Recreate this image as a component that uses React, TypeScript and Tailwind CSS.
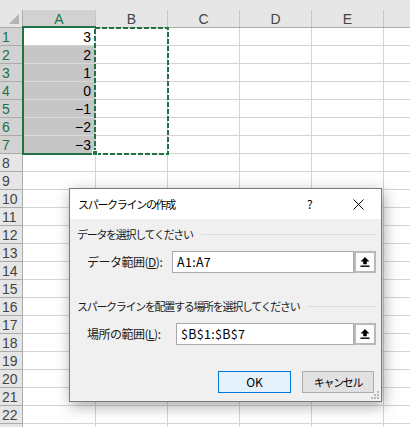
import React from 'react';

const COLS = [
  { key: 'A', w: 'w-[73px]' },
  { key: 'B', w: 'w-[72px]' },
  { key: 'C', w: 'w-[72px]' },
  { key: 'D', w: 'w-[72px]' },
  { key: 'E', w: 'w-[72px]' },
];

const VALUES = ['3', '2', '1', '0', '−1', '−2', '−3'];
const ROW_COUNT = 23;

const gridFont = "font-['Liberation_Sans','Noto_Sans_CJK_JP',sans-serif]";
const uiFont = "font-['Noto_Sans_CJK_JP','Noto_Sans',sans-serif]";
// Japanese text in the dialog is narrower than full-width CJK glyphs
const jp = 'text-[11px] tracking-[-1.3px] leading-[16px]';

const RefIcon: React.FC = () => (
  <svg width="12" height="12" viewBox="0 0 12 12">
    <path d="M6 1 L10.5 5.5 L7.8 5.5 L7.8 8.3 L4.2 8.3 L4.2 5.5 L1.5 5.5 Z" fill="#000" />
    <rect x="1.5" y="9.5" width="9" height="1.4" fill="#000" />
  </svg>
);

const RefInput: React.FC<{ value: string; labelWidth: string; label: React.ReactNode }> = ({ value, labelWidth, label }) => (
  <div className="flex items-center h-[22px] pl-[17px] pr-[5px]">
    <div className={`${labelWidth} shrink-0 text-[12px] tracking-[-0.5px] leading-[16px] text-[#1a1a1a]`}>{label}</div>
    <div className="flex-1 h-[22px] bg-white border border-[#a9a9a9] flex items-center pl-[4px] text-[12.5px] leading-[16px] text-black tracking-[0.3px]">
      {value}
    </div>
    <div className="w-[22px] h-[22px] shrink-0 border-2 border-[#b9b9b9] bg-[#fcfcfc] flex items-center justify-center">
      <RefIcon />
    </div>
  </div>
);

const GroupLabel: React.FC<{ text: string }> = ({ text }) => (
  <div className="flex items-center h-[14px] pl-[7px] pr-[5px]">
    <span className={`${jp} text-[#1a1a1a] whitespace-nowrap`}>{text}</span>
    <div className="flex-1 ml-[8px] border-t border-[#dcdcdc]" />
  </div>
);

const SparklineDialog: React.FC = () => (
  <div className={`absolute left-[69px] top-[188px] w-[313px] h-[214px] border border-[#7a7a7a] bg-[#f0f0f0] shadow-[2px_4px_14px_rgba(0,0,0,0.35)] flex flex-col ${uiFont}`}>
    <div className="h-[30px] bg-white flex items-center pl-[8px] shrink-0">
      <span className={`${jp} text-black flex-1`}>スパークラインの作成</span>
      <span className="text-[12px] leading-[16px] text-black w-[10px] mr-[36px]">?</span>
      <svg width="11" height="11" viewBox="0 0 11 11" className="mr-[17px]">
        <path d="M0.5 0.5 L10.5 10.5 M10.5 0.5 L0.5 10.5" stroke="#000" strokeWidth="1" />
      </svg>
    </div>
    <div className="mt-[8px]">
      <GroupLabel text="データを選択してください" />
    </div>
    <div className="mt-[10px]">
      <RefInput
        value="A1:A7"
        labelWidth="w-[85px]"
        label={<>データ範囲(<span className="underline">D</span>):</>}
      />
    </div>
    <div className="mt-[26px]">
      <GroupLabel text="スパークラインを配置する場所を選択してください" />
    </div>
    <div className="mt-[10px]">
      <RefInput
        value="$B$1:$B$7"
        labelWidth="w-[89px]"
        label={<>場所の範囲(<span className="underline">L</span>):</>}
      />
    </div>
    <div className="mt-[26px] flex justify-end gap-[11px] pr-[7px]">
      <div className="w-[73px] h-[22px] border border-[#0078d7] bg-[#e5f1fb] flex items-center justify-center text-[12px] leading-[16px] text-black">
        OK
      </div>
      <div className={`w-[72px] h-[22px] border border-[#adadad] bg-[#e1e1e1] flex items-center justify-center ${jp} text-black`}>
        キャンセル
      </div>
    </div>
    <svg width="9" height="9" viewBox="0 0 9 9" className="absolute right-[1px] bottom-[1px]">
      <rect x="6" y="0" width="2" height="2" fill="#b8b8b8" />
      <rect x="3" y="3" width="2" height="2" fill="#b8b8b8" />
      <rect x="6" y="3" width="2" height="2" fill="#b8b8b8" />
      <rect x="0" y="6" width="2" height="2" fill="#b8b8b8" />
      <rect x="3" y="6" width="2" height="2" fill="#b8b8b8" />
      <rect x="6" y="6" width="2" height="2" fill="#b8b8b8" />
    </svg>
  </div>
);

const Sheet: React.FC = () => {
  const rows = Array.from({ length: ROW_COUNT }, (_, i) => i + 1);
  return (
    <div className={`relative w-[410px] h-[427px] overflow-hidden bg-white ${gridFont}`}>
      <div className="h-[10px] bg-[#e6e6e6]" />
      {/* column headers */}
      <div className="flex h-[18px] bg-[#e6e6e6] border-b border-[#ababab]">
        <div className="w-[23px] shrink-0 border-r border-[#ababab] relative">
          <svg width="11" height="11" viewBox="0 0 11 11" className="absolute left-[9px] top-[4px]">
            <path d="M10 0 L10 10 L0 10 Z" fill="#b4b4b4" />
          </svg>
        </div>
        {COLS.map((c) => (
          <div
            key={c.key}
            className={`${c.w} shrink-0 border-r border-[#c6c6c6] flex items-center justify-center text-[14px] leading-[16px] pt-[1px] ${
              c.key === 'A' ? 'bg-[#d2d2d2] text-[#217346] border-b-2 border-b-[#217346] -mb-px' : 'text-[#444]'
            }`}
          >
            {c.key}
          </div>
        ))}
        <div className="flex-1" />
      </div>
      {/* rows */}
      {rows.map((r) => {
        const sel = r <= 7;
        return (
          <div key={r} className="flex h-[18px]">
            <div
              className={`w-[23px] shrink-0 border-r border-b border-[#ababab] flex items-center pl-[2px] text-[14px] leading-[16px] ${
                sel ? 'bg-[#d2d2d2] text-[#217346]' : 'bg-[#e6e6e6] text-[#444]'
              }`}
            >
              {r}
            </div>
            {COLS.map((c) => {
              const isA = c.key === 'A';
              const val = isA && sel ? VALUES[r - 1] : '';
              const fill = isA && sel && r > 1 ? 'bg-[#c6c6c6] border-b-[#dadada]' : 'bg-white';
              return (
                <div
                  key={c.key}
                  className={`${c.w} shrink-0 border-r border-b border-[#d4d4d4] ${fill} flex items-center justify-end pr-[4px] text-[14px] leading-[16px] text-black`}
                >
                  {val}
                </div>
              );
            })}
            <div className="flex-1 border-b border-[#d4d4d4]" />
          </div>
        );
      })}

      {/* active selection A1:A7 */}
      <div className="absolute left-[22px] top-[26px] w-[74px] h-[129px] border-2 border-r-0 border-[#217346] pointer-events-none" />
      {/* marching ants around B1:B7 */}
      <svg className="absolute left-[94px] top-[27px] pointer-events-none" width="75" height="128" viewBox="0 0 75 128">
        <rect x="1" y="1" width="73" height="126" fill="none" stroke="#217346" strokeWidth="2" strokeDasharray="5 2" />
      </svg>
      {/* fill handle */}
      <div className="absolute left-[92px] top-[150px] w-[6px] h-[6px] bg-[#217346] border border-white" />

      <SparklineDialog />
    </div>
  );
};

export default function App() {
  return <Sheet />;
}
